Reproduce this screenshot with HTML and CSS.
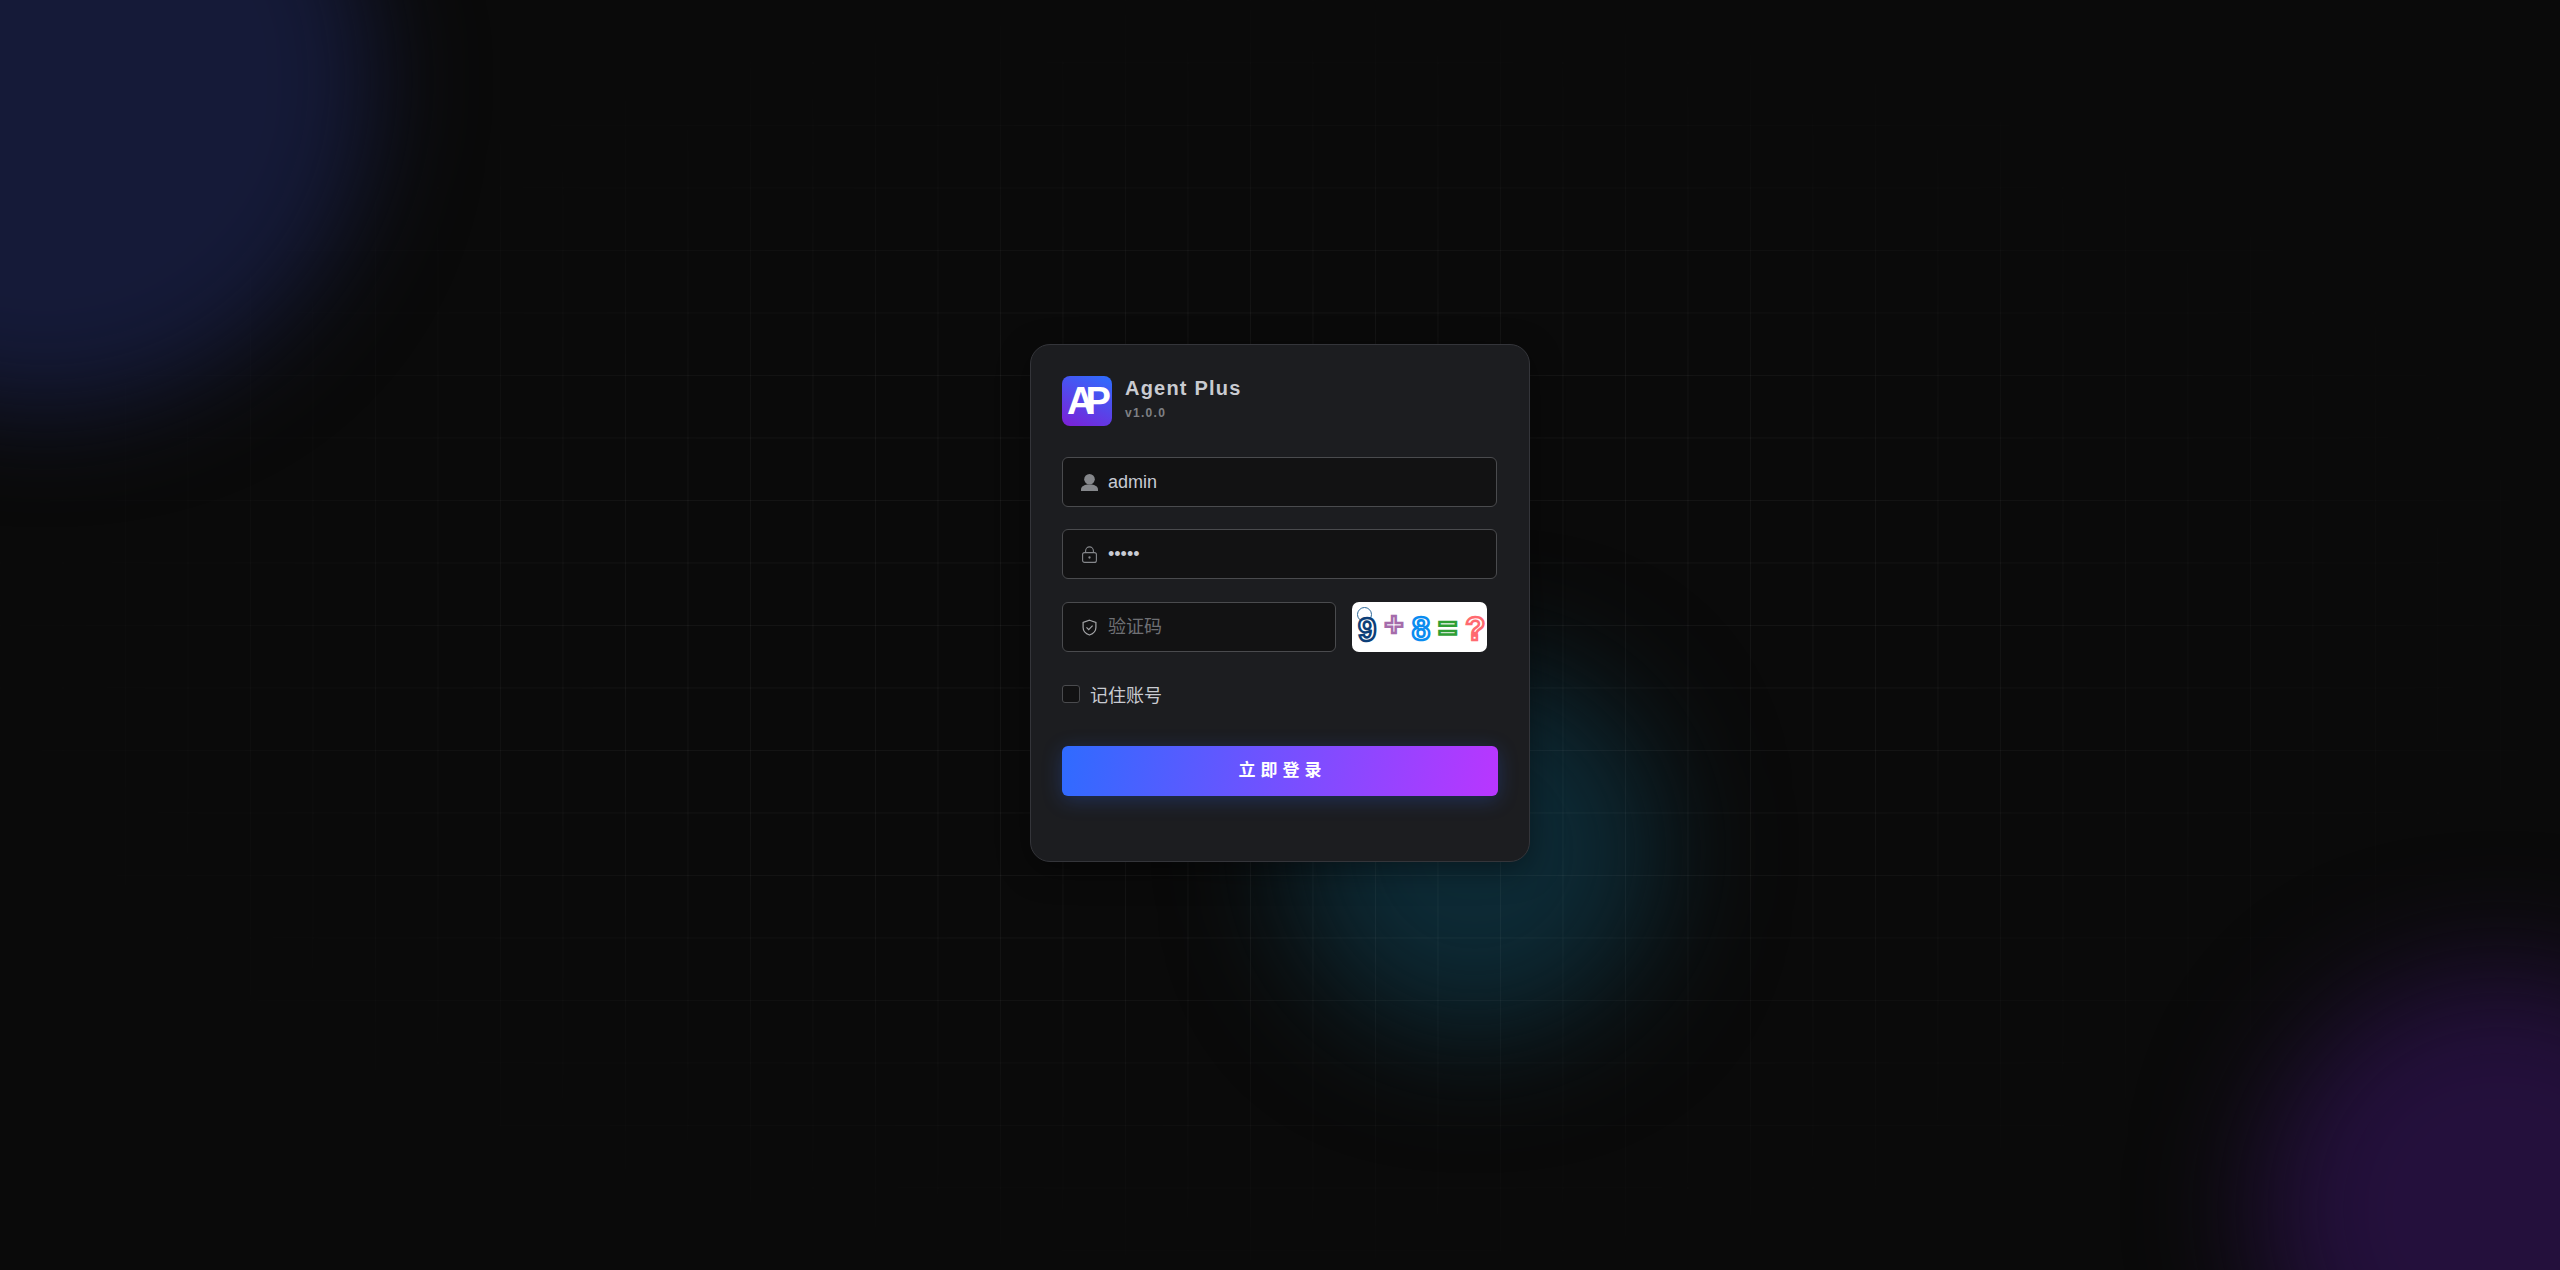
FILE: index.html
```html
<html>
  <head>
    <meta charset="utf-8">
    <title>Agent Plus</title>
    <link rel="stylesheet" href="styles.css">
  </head>
  <body class="body">
    <div class="Blob Blob--blue"></div>
    <div class="Blob Blob--teal"></div>
    <div class="Blob Blob--purple"></div>
    <div class="Grid"></div>

    <div class="Page">
      <form class="Card">
        <div class="Brand">
          <div class="Brand-logo">AP</div>
          <div class="Brand-text">
            <div class="Brand-name">Agent Plus</div>
            <div class="Brand-version">v1.0.0</div>
          </div>
        </div>

        <div class="Field">
          <svg class="Field-icon" viewBox="0 0 17 17">
            <circle cx="8.5" cy="5.3" r="5.3" fill="#85878b"/>
            <path d="M0 17v-1.4C0 12.6 3 10.6 8.5 10.6S17 12.6 17 15.6V17z" fill="#85878b"/>
          </svg>
          <input class="Field-input" type="text" value="admin">
        </div>

        <div class="Field">
          <svg class="Field-icon" viewBox="0 0 17 17" fill="none" stroke="#85878b" stroke-width="1.1">
            <rect x="1.6" y="6.6" width="13.8" height="9.8" rx="2"/>
            <path d="M4.6 6.6V4.8a3.9 3.9 0 0 1 7.8 0v1.8"/>
            <circle cx="8.5" cy="11.5" r=".6" fill="#85878b"/>
          </svg>
          <input class="Field-input" type="password" value="12345">
        </div>

        <div class="CaptchaRow">
          <div class="Field Field--captcha">
            <svg class="Field-icon" viewBox="0 0 17 17" fill="none" stroke="#a4a5a8" stroke-width="1.2">
              <path d="M8.5 1.2l6.4 2.2v5c0 3.6-2.6 6.2-6.4 7.6-3.8-1.4-6.4-4-6.4-7.6v-5z"/>
              <path d="M5.5 8.4l2.2 2.2 3.9-3.9"/>
            </svg>
            <input class="Field-input" type="text" placeholder="验证码">
          </div>
          <div class="Captcha">
            <span class="Captcha-ring"></span>
            <span class="Captcha-char Captcha-char--nine">9</span>
            <span class="Captcha-char Captcha-char--plus">+</span>
            <span class="Captcha-char Captcha-char--eight">8</span>
            <span class="Captcha-char Captcha-char--equals">=</span>
            <span class="Captcha-char Captcha-char--ask">?</span>
          </div>
        </div>

        <label class="Remember">
          <input class="Remember-box" type="checkbox">
          <span>记住账号</span>
        </label>

        <button class="Submit" type="button">立即登录</button>
      </form>
    </div>
  </body>
</html>
```

FILE: styles.css
```css
html, body {
  padding: 0;
  margin: 0;
  height: 100%;
  overflow: hidden;
  background-color: #0a0a0a;
  font-family: "Liberation Sans", "Noto Sans CJK SC", sans-serif;
}

.Blob {
  position: absolute;
  border-radius: 50%;
}
.Blob--blue {
  left: -285px;
  top: -250px;
  width: 660px;
  height: 660px;
  background-color: #151a38;
  filter: blur(50px);
}
.Blob--teal {
  left: 1290px;
  top: 665px;
  width: 370px;
  height: 370px;
  background-color: #0d2a35;
  filter: blur(60px);
}
.Blob--purple {
  left: 2260px;
  top: 970px;
  width: 480px;
  height: 480px;
  background-color: #24103c;
  filter: blur(60px);
}

.Grid {
  position: absolute;
  left: 0;
  right: 0;
  top: 0;
  bottom: 0;
  background-image:
    linear-gradient(rgba(255, 255, 255, 0.042) 1px, transparent 1px),
    linear-gradient(90deg, rgba(255, 255, 255, 0.042) 1px, transparent 1px);
  background-size: 62.5px 62.5px;
  -webkit-mask-image: radial-gradient(ellipse at center, #000 35%, transparent 75%);
  mask-image: radial-gradient(ellipse at center, #000 35%, transparent 75%);
}

.Page {
  position: relative;
  display: flex;
  align-items: center;
  justify-content: center;
  height: 100%;
  padding-bottom: 48px;
  box-sizing: border-box;
}

.Card {
  display: flex;
  flex-direction: column;
  box-sizing: border-box;
  width: 500px;
  height: 518px;
  padding: 31px;
  background-color: #1c1d20;
  border: 1px solid #34353a;
  border-radius: 20px;
  box-shadow: 0 8px 32px rgba(0, 0, 0, 0.4);
}

.Brand {
  display: flex;
  align-items: center;
  gap: 13px;
  margin-bottom: 31px;
}
.Brand-logo {
  flex: none;
  box-sizing: border-box;
  width: 50px;
  height: 50px;
  padding-left: 5px;
  border-radius: 8px;
  background-image: linear-gradient(25deg, #7d1fd6, #2c6fff);
  color: white;
  font-size: 38px;
  font-weight: bold;
  letter-spacing: -9px;
  line-height: 51px;
}
.Brand-text {
  margin-bottom: 5px;
}
.Brand-name {
  color: #c9cbd1;
  font-size: 20px;
  font-weight: bold;
  letter-spacing: 1.2px;
  line-height: 24px;
}
.Brand-version {
  margin-top: 5px;
  color: #7f8084;
  font-size: 12px;
  font-weight: bold;
  letter-spacing: 1.3px;
  line-height: 16px;
}

.Field {
  display: flex;
  align-items: center;
  gap: 10px;
  box-sizing: border-box;
  width: 435px;
  height: 50px;
  margin-bottom: 22px;
  padding: 0 18px;
  background-color: #121213;
  border: 1px solid #4a4b4e;
  border-radius: 6px;
}
.Field--captcha {
  width: 274px;
  margin-bottom: 0;
}
.Field-icon {
  flex: none;
  width: 17px;
  height: 17px;
}
.Field-input {
  flex: 1;
  min-width: 0;
  padding: 0;
  background: none;
  border: none;
  outline: none;
  color: #c8cbd3;
  font-family: inherit;
  font-size: 18px;
}
.Field-input::placeholder {
  color: #6e6f73;
}

.CaptchaRow {
  display: flex;
  gap: 16px;
  margin-top: 1px;
  margin-bottom: 33px;
}
.Captcha {
  position: relative;
  display: flex;
  align-items: center;
  gap: 8px;
  box-sizing: border-box;
  width: 135px;
  height: 50px;
  padding-left: 6px;
  background-color: white;
  border-radius: 7px;
  overflow: hidden;
}
.Captcha-ring {
  position: absolute;
  left: 5px;
  top: 5px;
  width: 13px;
  height: 13px;
  border: 1px solid #2f6a9a;
  border-radius: 50%;
}
.Captcha-char {
  color: white;
  font-size: 33px;
  font-weight: bold;
  line-height: 1;
  -webkit-text-stroke: 2.5px currentColor;
}
.Captcha-char--nine {
  -webkit-text-stroke-color: #0d3f78;
  transform: translateY(2px);
}
.Captcha-char--plus {
  -webkit-text-stroke-color: #a56cab;
  transform: translateY(-3px);
}
.Captcha-char--eight {
  -webkit-text-stroke-color: #0a8cf0;
  transform: translateY(1px);
}
.Captcha-char--equals {
  -webkit-text-stroke-color: #2e9e34;
  transform: translateY(1px);
}
.Captcha-char--ask {
  -webkit-text-stroke-color: #ff6a70;
  transform: translateY(1px);
}

.Remember {
  display: flex;
  align-items: center;
  gap: 10px;
  height: 18px;
  margin-bottom: 43px;
  color: #c9cbd1;
  font-size: 18px;
}
.Remember-box {
  appearance: none;
  width: 18px;
  height: 18px;
  margin: 0;
  background-color: #121213;
  border: 1px solid #4a4b4e;
  border-radius: 3px;
}

.Submit {
  width: 436px;
  height: 50px;
  padding: 0 0 5px 5px;
  background-image: linear-gradient(100deg, #2f6bff, #b936ff);
  border: none;
  border-radius: 6px;
  box-shadow: 0 4px 20px rgba(47, 107, 255, 0.25);
  color: white;
  font-family: inherit;
  font-size: 17px;
  font-weight: bold;
  letter-spacing: 5px;
  cursor: pointer;
}
```
